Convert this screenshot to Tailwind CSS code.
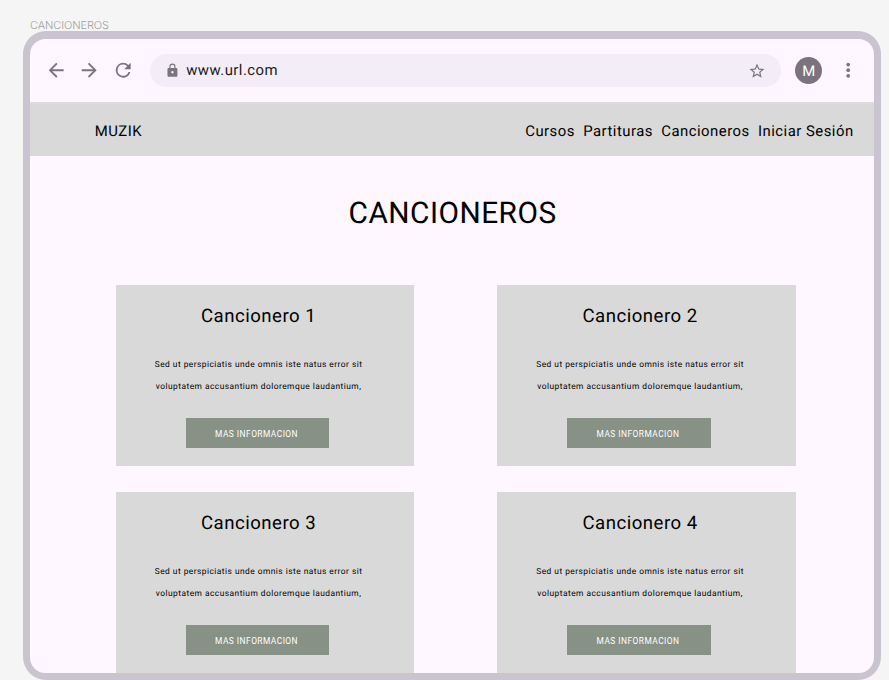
<!DOCTYPE html>
<html lang="es">
<head>
<meta charset="utf-8">
<title>Cancioneros</title>
<script src="https://cdn.jsdelivr.net/npm/@tailwindcss/browser@4"></script>
</head>
<body class="h-[680px] w-[889px] overflow-hidden bg-[#f5f5f5] font-[Roboto,sans-serif] text-black [text-rendering:geometricPrecision]">
<div class="flex h-[31.3px] items-end pl-[30px]"><span class="mb-[-1px] font-[Inter,sans-serif] text-[11px] leading-[14px] font-light tracking-[-0.1px] text-[#a0a0a0]">CANCIONEROS</span></div>
<div class="ml-[22.7px] h-[649px] w-[858.8px] rounded-[23px] bg-[#cac4d0] p-[7.4px]">
  <div class="flex h-full flex-col overflow-hidden rounded-[15.5px] bg-[#fef7ff]">
    <header class="flex h-[63.3px] shrink-0 items-center pt-[0.5px] pr-[15px] pl-[15.2px] text-[#79747e]">
      <svg class="size-[22.4px]" viewBox="0 0 24 24" fill="currentColor"><path d="M20 11H7.83l5.59-5.59L12 4l-8 8 8 8 1.41-1.41L7.83 13H20z"/></svg>
      <svg class="ml-[10.8px] size-[22.4px]" viewBox="0 0 24 24" fill="currentColor"><path d="m12 4-1.41 1.41L16.17 11H4v2h12.17l-5.58 5.59L12 20l8-8z"/></svg>
      <svg class="ml-[11px] size-[22.4px]" viewBox="0 0 24 24" fill="currentColor"><path d="M17.65 6.35A7.96 7.96 0 0 0 12 4a8 8 0 1 0 7.73 10h-2.08A6 6 0 1 1 12 6c1.66 0 3.14.69 4.22 1.78L13 11h7V4z"/></svg>
      <div class="ml-[15.4px] flex h-[33.4px] w-[631px] items-center rounded-full bg-[#f3edf7] pr-[15px] pl-[15px]">
        <svg class="size-[14.9px]" viewBox="0 0 16 16" fill="currentColor"><path d="M12 5.33h-.67V4a3.33 3.33 0 0 0-6.66 0v1.33H4c-.73 0-1.33.6-1.33 1.34v6.66c0 .74.6 1.34 1.33 1.34h8c.73 0 1.33-.6 1.33-1.34V6.67c0-.74-.6-1.34-1.33-1.34M8 11.33a1.33 1.33 0 1 1 0-2.66 1.33 1.33 0 0 1 0 2.66M10.07 5.33H5.93V4a2.07 2.07 0 0 1 4.14 0z"/></svg>
        <span class="ml-[6.7px] grow text-[14.9px] tracking-[0.465px] text-[#1d1b20]">www.url.com</span>
        <svg class="size-[18px]" viewBox="0 0 24 24" fill="currentColor"><path d="m22 9.24-7.19-.62L12 2 9.19 8.63 2 9.24l5.46 4.73L5.82 21 12 17.27 18.18 21l-1.63-7.03zM12 15.4l-3.76 2.27 1-4.28-3.32-2.88 4.38-.38L12 6.1l1.71 4.04 4.38.38-3.32 2.88 1 4.28z"/></svg>
      </div>
      <span class="ml-[14.8px] flex size-[26.6px] items-center justify-center rounded-full bg-[#79747e] pt-[1px] text-[14.9px] text-white">M</span>
      <svg class="ml-[14.5px] size-[22.4px]" viewBox="0 0 24 24" fill="currentColor"><circle cx="12" cy="6" r="2"/><circle cx="12" cy="12" r="2"/><circle cx="12" cy="18" r="2"/></svg>
    </header>
    <nav class="flex h-[54px] shrink-0 items-center justify-between border-t-2 border-[#dedae0] bg-[#d9d9d9] pt-[3px] pr-[20.5px] pl-[64.6px] text-[14.9px] tracking-[0.48px]">
      <span>MUZIK</span>
      <div class="flex gap-[8.3px]"><span>Cursos</span><span>Partituras</span><span>Cancioneros</span><span>Iniciar Sesión</span></div>
    </nav>
    <main class="grow">
      <h1 class="pt-[38px] pl-[1px] text-center text-[29.8px] leading-[40px] tracking-[0.465px]">CANCIONEROS</h1>
      <div class="mt-[51px] ml-[86px] grid grid-cols-[298px_298.4px] gap-x-[83.3px] gap-y-[26px]">
        <section class="flex h-[181px] flex-col items-center bg-[#d9d9d9] pr-[13px]">
          <h2 class="mt-[19px] text-[18.6px] leading-[24px] tracking-[0.5px]">Cancionero 1</h2>
          <p class="mt-[26.2px] text-center text-[8.4px] leading-[22.3px] tracking-[0.465px]">Sed ut perspiciatis unde omnis iste natus error sit<br>voluptatem accusantium doloremque laudantium,</p>
          <button class="mt-[19.6px] mr-[2px] h-[30px] w-[143.6px] bg-[#879186] pt-[1px] pr-[2px] text-[8.4px] tracking-[0.465px] text-white">MAS INFORMACION</button>
        </section>
        <section class="flex h-[181px] flex-col items-center bg-[#d9d9d9] pr-[13px]">
          <h2 class="mt-[19px] text-[18.6px] leading-[24px] tracking-[0.5px]">Cancionero 2</h2>
          <p class="mt-[26.2px] text-center text-[8.4px] leading-[22.3px] tracking-[0.465px]">Sed ut perspiciatis unde omnis iste natus error sit<br>voluptatem accusantium doloremque laudantium,</p>
          <button class="mt-[19.6px] mr-[2px] h-[30px] w-[143.6px] bg-[#879186] pt-[1px] pr-[2px] text-[8.4px] tracking-[0.465px] text-white">MAS INFORMACION</button>
        </section>
        <section class="flex h-[181px] flex-col items-center bg-[#d9d9d9] pr-[13px]">
          <h2 class="mt-[19px] text-[18.6px] leading-[24px] tracking-[0.5px]">Cancionero 3</h2>
          <p class="mt-[26.2px] text-center text-[8.4px] leading-[22.3px] tracking-[0.465px]">Sed ut perspiciatis unde omnis iste natus error sit<br>voluptatem accusantium doloremque laudantium,</p>
          <button class="mt-[19.6px] mr-[2px] h-[30px] w-[143.6px] bg-[#879186] pt-[1px] pr-[2px] text-[8.4px] tracking-[0.465px] text-white">MAS INFORMACION</button>
        </section>
        <section class="flex h-[181px] flex-col items-center bg-[#d9d9d9] pr-[13px]">
          <h2 class="mt-[19px] text-[18.6px] leading-[24px] tracking-[0.5px]">Cancionero 4</h2>
          <p class="mt-[26.2px] text-center text-[8.4px] leading-[22.3px] tracking-[0.465px]">Sed ut perspiciatis unde omnis iste natus error sit<br>voluptatem accusantium doloremque laudantium,</p>
          <button class="mt-[19.6px] mr-[2px] h-[30px] w-[143.6px] bg-[#879186] pt-[1px] pr-[2px] text-[8.4px] tracking-[0.465px] text-white">MAS INFORMACION</button>
        </section>
      </div>
    </main>
  </div>
</div>
</body>
</html>
